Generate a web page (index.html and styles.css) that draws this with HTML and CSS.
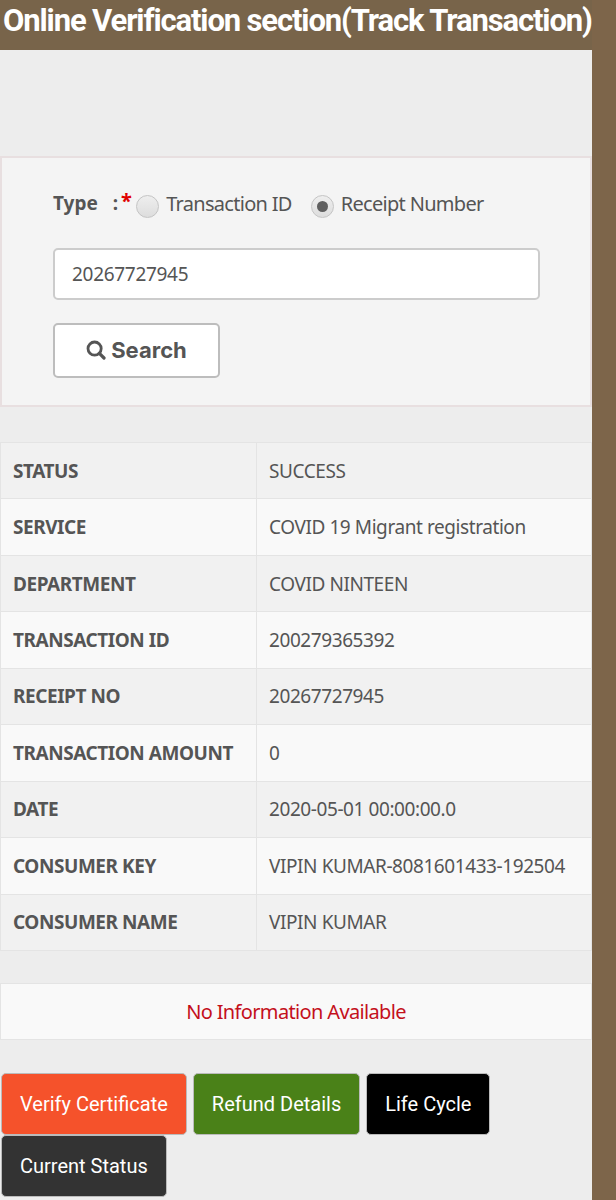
FILE: index.html
```html
<!DOCTYPE html>
<html lang="en">
<head>
  <meta charset="UTF-8" />
  <meta name="viewport" content="width=device-width, initial-scale=1.0"/>
  <title>Track Transaction</title>
  <link rel="stylesheet" href="styles.css">
</head>
<body>
  <div class="main">
    <h1 class="page-title">Online Verification section(Track Transaction)</h1>

    <!-- Search form -->
    <form class="search-panel">
      <div class="type-row">
        <span class="type-label">Type&nbsp; :</span><span class="required">*</span>
        <span class="radio"></span>
        <span class="radio-text">Transaction ID</span>
        <span class="radio radio-on"></span>
        <span class="radio-text">Receipt Number</span>
      </div>
      <input class="search-input" type="text" value="20267727945" />
      <button class="search-btn" type="button">
        <svg class="search-icon" viewBox="0 0 20 20" width="20" height="20">
          <circle cx="8.6" cy="8.6" r="6.6" fill="none" stroke="#555" stroke-width="2.8"/>
          <path d="M13.4 13.4 L18 18" stroke="#555" stroke-width="3.2" stroke-linecap="round"/>
        </svg>
        Search
      </button>
    </form>

    <!-- Transaction details -->
    <table class="details">
      <tbody>
        <tr><th>STATUS</th><td>SUCCESS</td></tr>
        <tr><th>SERVICE</th><td>COVID 19 Migrant registration</td></tr>
        <tr><th>DEPARTMENT</th><td>COVID NINTEEN</td></tr>
        <tr><th>TRANSACTION ID</th><td>200279365392</td></tr>
        <tr><th>RECEIPT NO</th><td>20267727945</td></tr>
        <tr><th>TRANSACTION AMOUNT</th><td>0</td></tr>
        <tr><th>DATE</th><td>2020-05-01 00:00:00.0</td></tr>
        <tr><th>CONSUMER KEY</th><td>VIPIN KUMAR-8081601433-192504</td></tr>
        <tr><th>CONSUMER NAME</th><td>VIPIN KUMAR</td></tr>
      </tbody>
    </table>

    <div class="notice">No Information Available</div>

    <div class="actions">
      <button class="action action-orange" type="button">Verify Certificate</button>
      <button class="action action-green" type="button">Refund Details</button>
      <button class="action action-black" type="button">Life Cycle</button>
      <button class="action action-dark" type="button">Current Status</button>
    </div>
  </div>
</body>
</html>
```

FILE: styles.css
```css
html, body {
  margin: 0;
  padding: 0;
}
body {
  height: 1200px;
  overflow: hidden;
  background-color: #7d654a;
  font-family: 'Noto Sans', sans-serif;
  color: #555;
}
.main {
  width: 592px;
  height: 1200px;
  background-color: #ededed;
}
.page-title {
  margin: 0;
  height: 50px;
  padding-left: 3px;
  box-sizing: border-box;
  background-color: #78644a;
  color: #fff;
  font-family: 'Roboto', sans-serif;
  font-size: 31px;
  font-weight: 700;
  line-height: 41px;
  letter-spacing: -1.13px;
  white-space: nowrap;
}
.search-panel {
  margin-top: 106px;
  height: 251px;
  box-sizing: border-box;
  padding: 30px 52px 0 51px;
  background-color: #f4f4f4;
  border: 2px solid #e8dfe0;
}
.type-row {
  display: flex;
  align-items: center;
  height: 32px;
  font-size: 20px;
  letter-spacing: -0.7px;
}
.type-label {
  font-weight: 700;
  font-size: 19px;
  letter-spacing: 0;
  word-spacing: 2.5px;
  margin-top: -2px;
}
.required {
  color: #e00000;
  font-weight: 700;
  margin: -8px 5px 0 3px;
}
.radio {
  width: 23px;
  height: 23px;
  box-sizing: border-box;
  border: 1px solid #c4c4c4;
  border-radius: 50%;
  background: linear-gradient(#eee, #ddd);
  margin-top: 4px;
  display: flex;
  align-items: center;
  justify-content: center;
}
.radio-on::after {
  content: "";
  width: 11px;
  height: 11px;
  border-radius: 50%;
  background-color: #5f5f5f;
}
.radio-text {
  margin: -2px 19px 0 7px;
}
.search-input {
  display: block;
  width: 487px;
  height: 52px;
  box-sizing: border-box;
  margin-top: 28px;
  padding: 0 17px;
  font-family: inherit;
  font-size: 19px;
  letter-spacing: -0.3px;
  color: #555;
  background-color: #fff;
  border: 2px solid #ccc;
  border-radius: 5px;
}
.search-btn {
  display: flex;
  align-items: center;
  justify-content: center;
  gap: 5px;
  width: 167px;
  height: 55px;
  margin-top: 23px;
  padding: 0 0 2px;
  font-family: 'Inter', sans-serif;
  font-size: 22px;
  font-weight: 700;
  color: #555;
  background-color: #fff;
  border: 2px solid #bdbdbd;
  border-radius: 5px;
}
.details {
  width: 592px;
  margin-top: 35px;
  border-collapse: collapse;
  table-layout: fixed;
  background-color: #f9f9f9;
}
.details th, .details td {
  height: 56.45px;
  box-sizing: border-box;
  padding: 0 12px;
  border: 1px solid #e4e4e4;
  font-size: 19px;
  letter-spacing: -0.42px;
  text-align: left;
  white-space: nowrap;
}
.details th {
  width: 256px;
  font-weight: 700;
  letter-spacing: -0.45px;
}
.details tr:nth-child(odd) th, .details tr:nth-child(odd) td {
  background-color: #f1f1f1;
}
.notice {
  margin-top: 32px;
  height: 57px;
  line-height: 56px;
  box-sizing: border-box;
  background-color: #f9f9f9;
  border: 1px solid #e4e4e4;
  color: #c4101c;
  font-size: 20px;
  letter-spacing: -0.65px;
  text-align: center;
}
.actions {
  display: flex;
  flex-wrap: wrap;
  column-gap: 6px;
  margin-top: 33px;
  padding-left: 1px;
}
.action {
  height: 62px;
  padding: 0 18px;
  font-family: 'Roboto', sans-serif;
  font-size: 20px;
  color: #fff;
  border: 1px solid #bbb;
  border-radius: 5px;
}
.action-orange { background-color: #f5522b; }
.action-green { background-color: #4a8118; }
.action-black { background-color: #000; }
.action-dark { background-color: #333; }
```
